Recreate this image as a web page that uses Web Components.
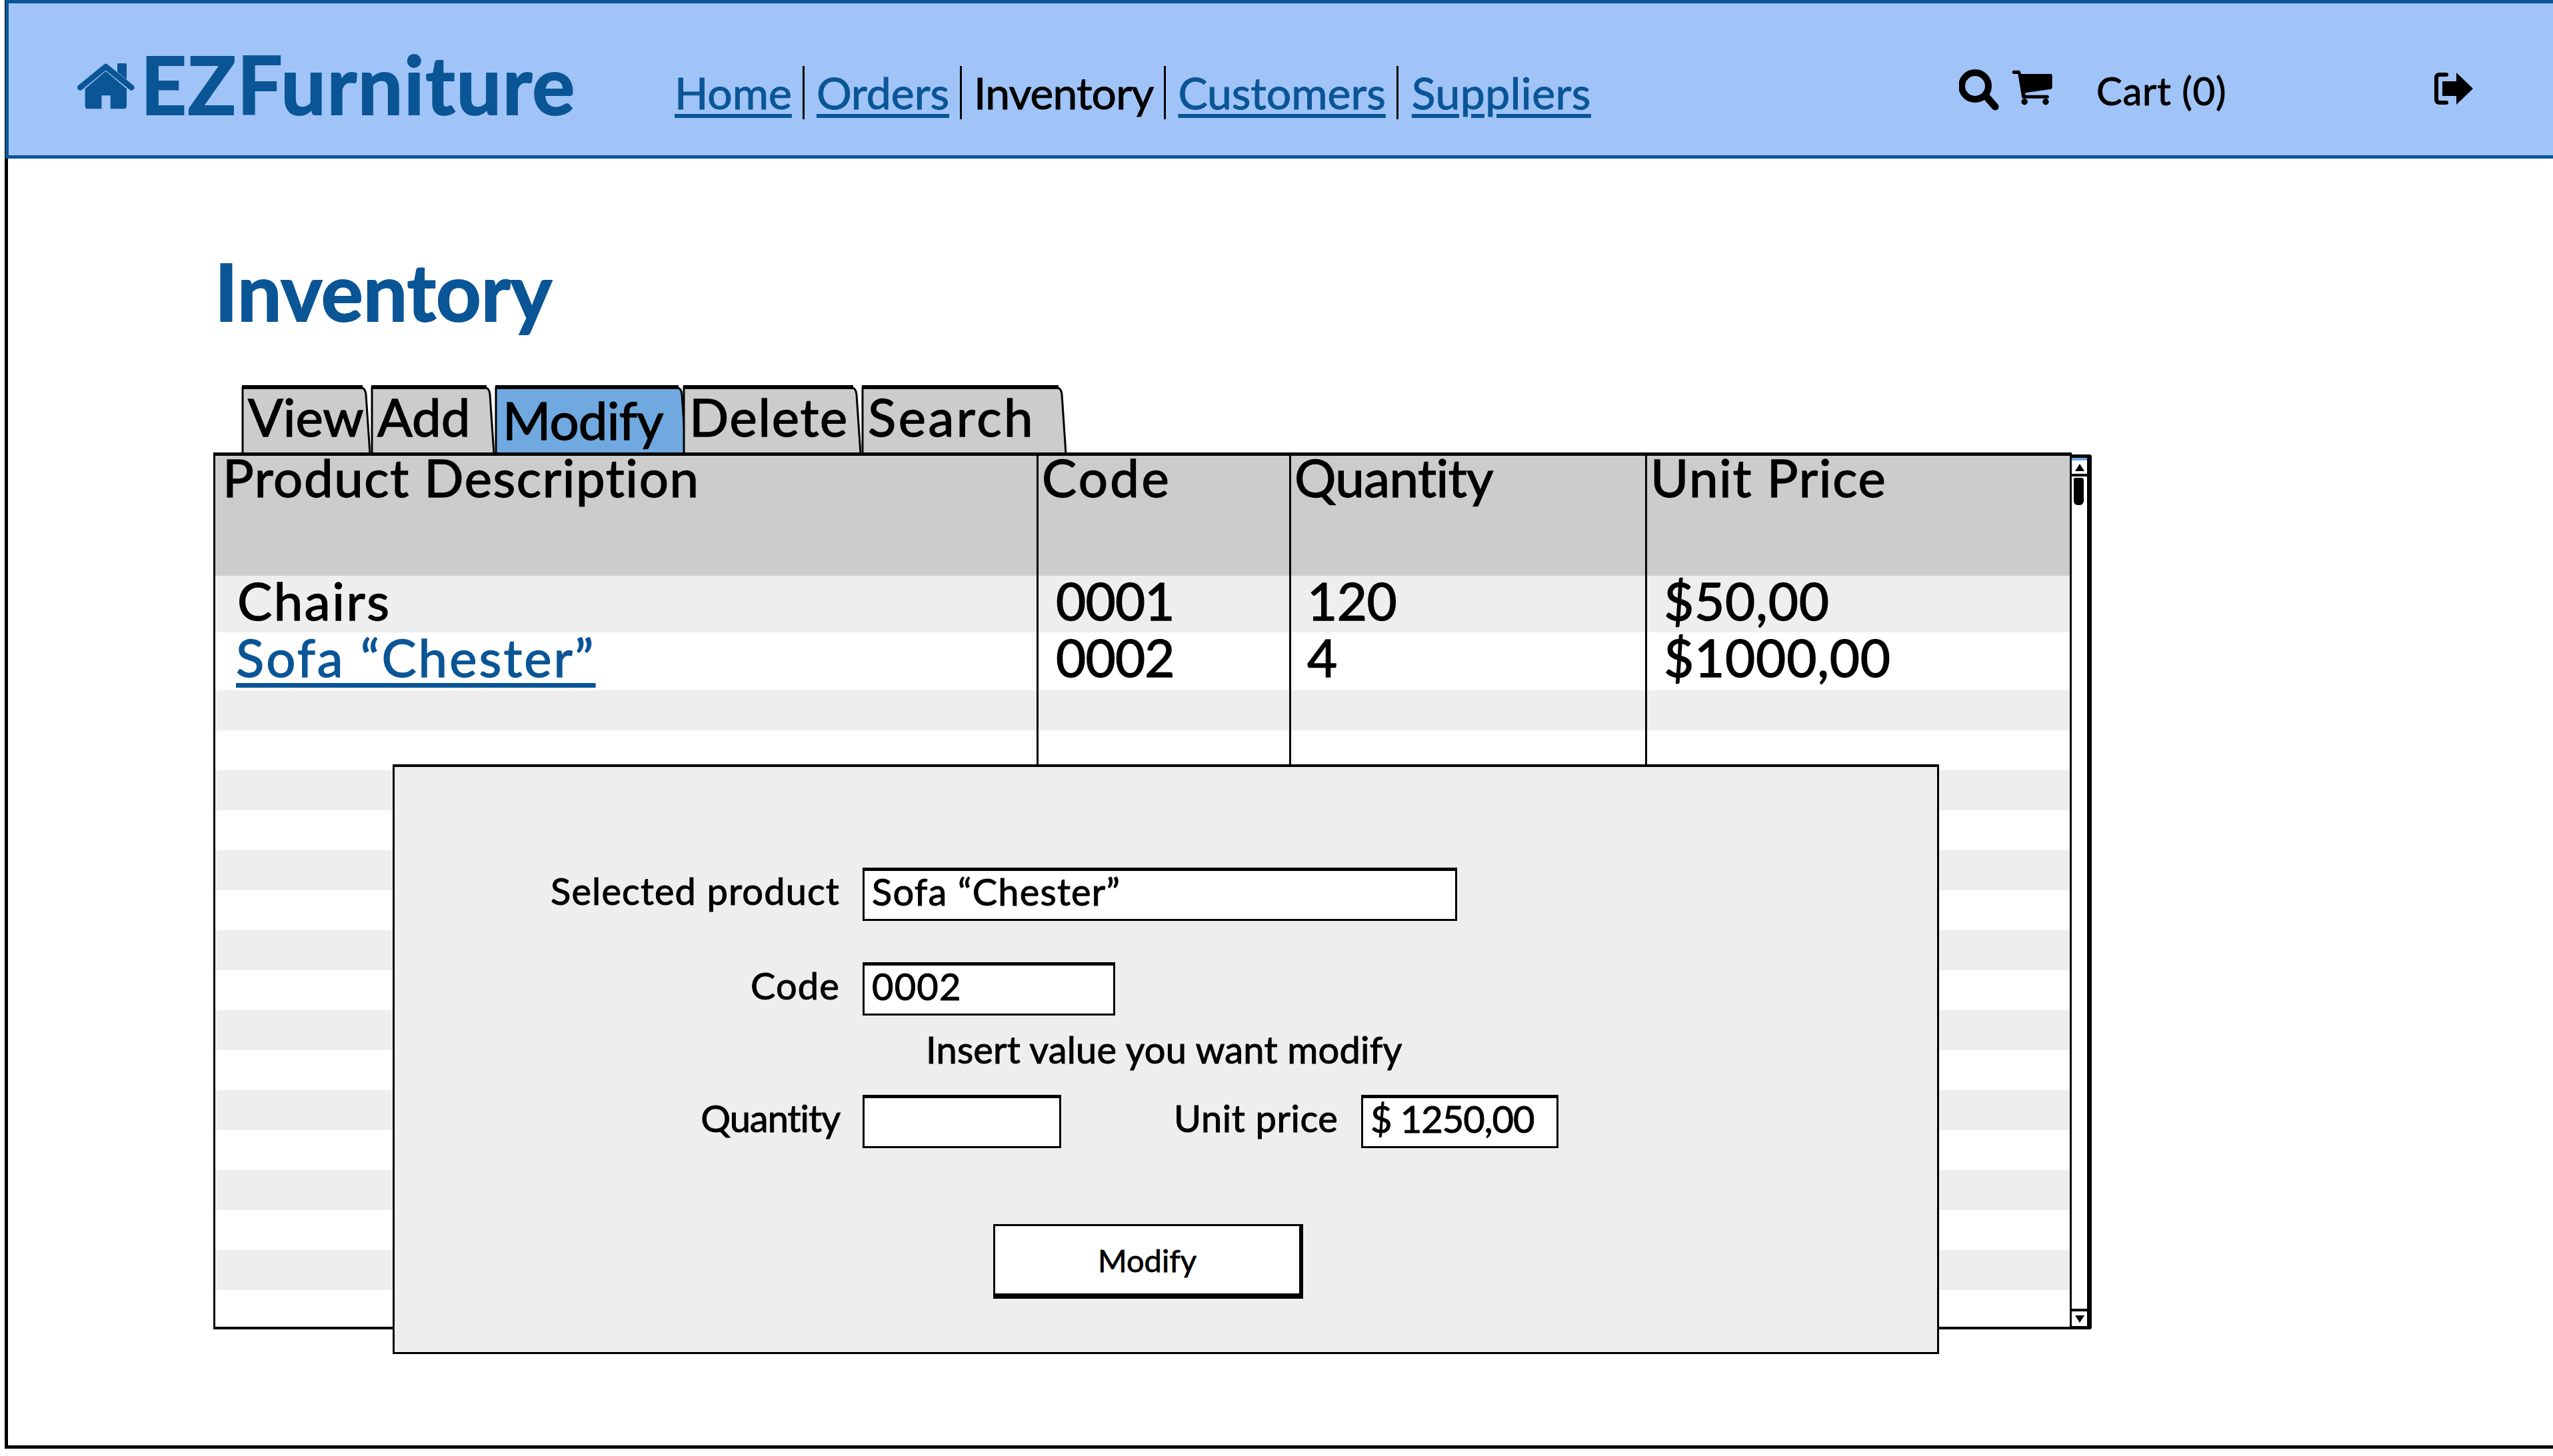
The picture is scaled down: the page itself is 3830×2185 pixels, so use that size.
<!DOCTYPE html>
<html>
<head>
<meta charset="utf-8">
<title>EZFurniture</title>
<style>
  html, body { margin: 0; background: #fff; }
  body { font-family: "Lato", "Noto Sans", sans-serif; font-variant-ligatures: none; color: #000; width: 3830px; height: 2185px; overflow: hidden; }
</style>
</head>
<body>
<ez-page>
  <ez-header slot="header">
    <ez-nav-item href>Home</ez-nav-item>
    <ez-nav-item href>Orders</ez-nav-item>
    <ez-nav-item style="letter-spacing:-.9px">Inventory</ez-nav-item>
    <ez-nav-item href>Customers</ez-nav-item>
    <ez-nav-item href last style="letter-spacing:.5px;margin-left:2px">Suppliers</ez-nav-item>
  </ez-header>
  <ez-inventory>
    <ez-tabs>
      <ez-tab w="194">View</ez-tab>
      <ez-tab w="186">Add</ez-tab>
      <ez-tab w="288" active style="letter-spacing:-.8px">Modify</ez-tab>
      <ez-tab w="268" style="margin-left:-6px;letter-spacing:1.8px">Delete</ez-tab>
      <ez-tab w="308" style="letter-spacing:3.6px">Search</ez-tab>
    </ez-tabs>
    <ez-table>
      <ez-modify-dialog slot="overlay"></ez-modify-dialog>
    </ez-table>
  </ez-inventory>
</ez-page>

<script>
const INK = '#000';
const BLUE = '#0a5596';

class EzPage extends HTMLElement {
  constructor() {
    super();
    this.attachShadow({ mode: 'open' }).innerHTML = `
      <style>
        :host { display: block; width: 3830px; height: 2174px; box-sizing: border-box; border-left: 5px solid ${INK}; border-bottom: 5px solid ${INK}; margin-left: 7px; }
        .content { padding: 0 0 0 308px; }
      </style>
      <slot name="header"></slot>
      <div class="content"><slot></slot></div>`;
  }
}

class EzHeader extends HTMLElement {
  constructor() {
    super();
    this.attachShadow({ mode: 'open' }).innerHTML = `
      <style>
        :host { display: flex; align-items: flex-start; box-sizing: border-box; height: 238px; margin-left: -4px; background: #a0c4f8; border: 5px solid ${BLUE}; border-right: 0; position: relative; }
        .logo { display: flex; align-items: flex-start; margin: 75px 0 0 102px; width: 897px; color: ${BLUE}; }
        .logo svg { width: 88px; height: 72px; margin-top: 13px; fill: ${BLUE}; flex: none; }
        .logo span { font-size: 120px; font-weight: 700; line-height: 92px; margin-left: 8px; letter-spacing: 1.6px; -webkit-text-stroke: 2px ${BLUE}; }
        nav { display: flex; margin-top: 94px; }
        .tools { display: flex; align-items: flex-start; margin-left: 536px; margin-top: 99px; }
        .tools svg { display: block; flex: none; }
        .cart { font-size: 58px; line-height: 60px; margin-left: 65px; margin-top: 2px; width: 507px; letter-spacing: .8px; -webkit-text-stroke: 1px #000; }
      </style>
      <div class="logo">
        <svg viewBox="50 52 264 214"><path d="M66 166 L181 72 L297 166" fill="none" stroke="${BLUE}" stroke-width="26" stroke-linecap="round" stroke-linejoin="round"/><path d="M233 62 Q233 57 238 57 H270 Q275 57 275 62 V130 L233 95 Z"/><path d="M181 92 L275 172 V250 Q275 262 263 262 H202 V202 H162 V262 H100 Q88 262 88 250 V172 Z"/></svg>
        <span>EZFurniture</span>
      </div>
      <nav><slot></slot></nav>
      <div class="tools">
        <svg width="60" height="62" viewBox="0 0 60 62"><circle cx="24" cy="25" r="20" fill="none" stroke="#000" stroke-width="10"/><path d="M41 41 L54 56" stroke="#000" stroke-width="11" stroke-linecap="round"/></svg>
        <svg width="62" height="54" viewBox="280 40 185 160" style="margin-left:19px"><path d="M290 45 H310 Q318 45 320 55 L323 60 H455 Q461 60 461 66 V122 Q461 127 455 128 L340 145 L342 155 H440 Q447 157 447 163 Q447 170 440 170 H330 Q325 170 325 163 L308 60 H290 Q282 60 282 52 Q282 45 290 45 Z"/><circle cx="337" cy="185" r="14"/><circle cx="432" cy="185" r="14"/></svg>
        <span class="cart">Cart (0)</span>
        <svg width="58" height="48" viewBox="0 0 58 48" style="margin-top:5px"><path d="M18 3 H8 Q3 3 3 8 V40 Q3 45 8 45 H18" fill="none" stroke="#000" stroke-width="6" stroke-linecap="round"/><path d="M33 0 L58 24 L33 48 V35 H12 V13 H33 Z"/></svg>
      </div>`;
  }
}

class EzNavItem extends HTMLElement {
  constructor() {
    super();
    this.attachShadow({ mode: 'open' }).innerHTML = `
      <style>
        :host { display: block; font-size: 66px; line-height: 80px; padding: 0 16px 0 18px; border-right: 3px solid ${INK}; white-space: nowrap; -webkit-text-stroke: 1px currentColor; }
        :host([last]) { border-right: 0; }
        :host([href]) { color: ${BLUE}; text-decoration: underline; text-decoration-thickness: 6px; text-underline-offset: 7px; }
        :host(:first-child) { padding-left: 0; }
      </style>
      <slot></slot>`;
  }
}

class EzInventory extends HTMLElement {
  constructor() {
    super();
    this.attachShadow({ mode: 'open' }).innerHTML = `
      <style>
        :host { display: block; width: 2830px; }
        h1 { margin: 146px 0 88px 2px; font-size: 118px; line-height: 106px; font-weight: 700; color: ${BLUE}; -webkit-text-stroke: 2px ${BLUE}; }
      </style>
      <h1>Inventory</h1>
      <slot></slot>`;
  }
}

class EzTabs extends HTMLElement {
  constructor() {
    super();
    this.attachShadow({ mode: 'open' }).innerHTML = `
      <style>
        :host { display: flex; padding-left: 42px; height: 101px; position: relative; z-index: 1; }
      </style>
      <slot></slot>`;
  }
}

class EzTab extends HTMLElement {
  constructor() {
    super();
    const w = +this.getAttribute('w');
    const fill = this.hasAttribute('active') ? '#6fa9e0' : '#cccccc';
    this.attachShadow({ mode: 'open' }).innerHTML = `
      <style>
        :host { display: block; position: relative; width: ${w}px; height: 101px; box-sizing: border-box; padding: 0 0 0 10px; font-size: 78px; line-height: 94px; white-space: nowrap; -webkit-text-stroke: 1.4px #000; }
        :host([active]) { padding: 5px 0 0 12px; }
        svg { position: absolute; inset: 0; z-index: -1; }
      </style>
      <svg width="${w}" height="101"><path d="M2 103 V4 H${w - 14} Q${w - 8} 4 ${w - 7} 14 L${w - 1} 103 Z" fill="${fill}" stroke="#000" stroke-width="3"/><path d="M1 3 H${w - 12}" stroke="#000" stroke-width="6"/></svg>
      <slot></slot>`;
  }
}

class EzTable extends HTMLElement {
  constructor() {
    super();
    const rows = [
      ['Chairs', '0001', '120', '$50,00'],
      ['<span class="link">Sofa “Chester”</span>', '0002', '4', '$1000,00'],
    ];
    const body = rows.map((r, i) => `
      <div class="row r${i}">${r.map((c, j) => `<div class="cell c${j}">${c}</div>`).join('')}</div>`).join('');
    const empty = '<div class="cell"></div><div class="cell"></div><div class="cell"></div><div class="cell"></div>';
    let blanks = '';
    for (let i = 0; i < 15; i++) {
      blanks += `<div class="row blank ${i % 2 ? '' : 'odd'}">${empty}</div>`;
    }
    this.attachShadow({ mode: 'open' }).innerHTML = `
      <style>
        :host { display: block; position: relative; width: 2818px; height: 1316px; }
        .box { display: flex; height: 100%; }
        .grid { display: flex; flex-direction: column; width: 2788px; box-sizing: border-box; border: 3px solid ${INK}; border-top-width: 5px; border-bottom-width: 4px; flex: none; }
        .row { display: grid; grid-template-columns: 1235px 379px 534px 1fr; flex: none; }
        .cell { border-right: 3px solid ${INK}; box-sizing: border-box; height: 100%; white-space: nowrap; }
        .cell:last-child { border-right: 0; }
        .head { height: 180px; background: #cccccc; font-size: 78px; line-height: 64px; -webkit-text-stroke: 1.4px #000; }
        .r0, .r1 { font-size: 78px; line-height: 75px; -webkit-text-stroke: 1.4px #000; }
        .r0 { height: 85px; background: #eeeeee; }
        .r1 { height: 87px; }
        .blank { height: 60px; }
        .fill { flex: 1; }
        .odd { background: #eeeeee; }
        .c0 { padding-left: 31px; letter-spacing: 2.6px; } .c1 { padding-left: 26px; letter-spacing: -.8px; } .c2 { padding-left: 24px; letter-spacing: -.5px; } .c3 { padding-left: 25px; letter-spacing: .8px; }
        .r0 .c0 { padding-left: 33px; }
        .h0 { padding-left: 11px; letter-spacing: 1.6px; } .h1 { padding-left: 5px; letter-spacing: 3.4px; } .h2 { padding-left: 5px; letter-spacing: -.5px; } .h3 { padding-left: 5px; letter-spacing: 1.7px; }
        .link { color: ${BLUE}; -webkit-text-stroke-color: ${BLUE}; letter-spacing: 3.1px; text-decoration: underline; text-decoration-thickness: 7px; text-underline-offset: 9px; }
        .bar { width: 30px; box-sizing: border-box; border-top: 5px solid ${INK}; border-right: 7px solid ${INK}; border-bottom: 5px solid ${INK}; margin: 3px 0 0 0; display: flex; flex-direction: column; background: #fff; border-radius: 0 4px 4px 0; }
        .btn { flex: none; height: 20px; display: flex; align-items: center; justify-content: center; border-bottom: 4px solid ${INK}; border-top: 4px solid #6fa9e0; }
        .btn.down { border-top: 4px solid ${INK}; border-bottom: 0; height: 22px; margin-top: auto; }
        .thumb { width: 15px; height: 41px; margin: 2px 0 0 3px; background: ${INK}; border-radius: 2px 4px 6px 6px; }
        ::slotted(*) { position: absolute; left: 269px; top: 468px; }
      </style>
      <div class="box">
        <div class="grid">
          <div class="row head"><div class="cell h0">Product Description</div><div class="cell h1">Code</div><div class="cell h2">Quantity</div><div class="cell h3">Unit Price</div></div>
          ${body}${blanks}
          <div class="row fill">${empty}</div>
        </div>
        <div class="bar">
          <div class="btn"><svg width="14" height="11"><path d="M7 0 L14 11 H0 Z"/></svg></div>
          <div class="thumb"></div>
          <div class="btn down"><svg width="14" height="11"><path d="M0 0 H14 L7 11 Z"/></svg></div>
        </div>
      </div>
      <slot name="overlay"></slot>`;
  }
}

class EzField extends HTMLElement {
  constructor() {
    super();
    this.attachShadow({ mode: 'open' }).innerHTML = `
      <style>
        :host { display: flex; align-items: center; -webkit-text-stroke: 1px #000; }
        .label { font-size: 56px; line-height: 68px; margin: -10px var(--label-gap, 34px) 0 0; letter-spacing: var(--label-ls, 1.1px); white-space: nowrap; text-align: right; flex: none; width: var(--label-w, auto); }
        .input { box-sizing: border-box; height: 80px; width: var(--input-w); border: 3px solid ${INK}; border-top-width: 5px; background: #fff; font-size: 56px; line-height: 62px; letter-spacing: var(--input-ls, 1.2px); padding-left: 11px; white-space: nowrap; }
      </style>
      <span class="label">${this.getAttribute('label')}</span>
      <div class="input"><slot></slot></div>`;
  }
}

class EzButton extends HTMLElement {
  constructor() {
    super();
    this.attachShadow({ mode: 'open' }).innerHTML = `
      <style>
        :host { display: flex; align-items: center; justify-content: center; box-sizing: border-box; width: 465px; height: 112px; background: #fff; border: 3px solid ${INK}; border-right-width: 6px; border-bottom-width: 8px; font-size: 47px; -webkit-text-stroke: .8px #000; }
      </style>
      <slot></slot>`;
  }
}

class EzModifyDialog extends HTMLElement {
  constructor() {
    super();
    this.attachShadow({ mode: 'open' }).innerHTML = `
      <style>
        :host { display: block; box-sizing: border-box; width: 2320px; height: 885px; background: #eeeeee; border: 3px solid ${INK}; border-top-width: 4px; padding: 151px 0 0 205px; }
        .row { display: flex; --label-w: 463px; }
        .gap { height: 62px; }
        .hint { font-size: 56px; line-height: 68px; margin: 17px 0 0 592px; letter-spacing: .2px; white-space: nowrap; -webkit-text-stroke: 1px #000; }
        .second { --label-w: 244px; --label-gap: 37px; --label-ls: .6px; --input-ls: -1px; margin-left: 169px; }
        .qty { margin-top: 34px; }
        ez-button { margin: 114px 0 0 693px; }
      </style>
      <div class="row"><ez-field label="Selected product" style="--input-w:892px">Sofa “Chester”</ez-field></div>
      <div class="gap"></div>
      <div class="row"><ez-field label="Code" style="--input-w:379px">0002</ez-field></div>
      <div class="hint">Insert value you want modify</div>
      <div class="row qty"><ez-field label="Quantity" style="--input-w:298px;--label-ls:-1px"></ez-field><ez-field class="second" label="Unit price" style="--input-w:296px">$ 1250,00</ez-field></div>
      <ez-button>Modify</ez-button>`;
  }
}

customElements.define('ez-page', EzPage);
customElements.define('ez-header', EzHeader);
customElements.define('ez-nav-item', EzNavItem);
customElements.define('ez-inventory', EzInventory);
customElements.define('ez-tabs', EzTabs);
customElements.define('ez-tab', EzTab);
customElements.define('ez-table', EzTable);
customElements.define('ez-field', EzField);
customElements.define('ez-button', EzButton);
customElements.define('ez-modify-dialog', EzModifyDialog);
</script>
</body>
</html>
